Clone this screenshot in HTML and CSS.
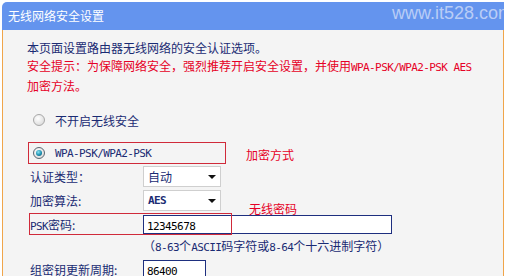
FILE: index.html
```html
<!DOCTYPE html>
<html lang="zh-CN">
<head>
    <meta charset="UTF-8">
    <meta name="viewport" content="width=device-width, initial-scale=1.0">
    <title>无线网络安全设置</title>
    <link rel="stylesheet" href="styles.css">
</head>
<body>
    <div class="panel">
        <!-- Header -->
        <div class="panel-head">
            <span class="panel-title">无线网络安全设置</span>
            <span class="watermark">www.it528.com</span>
        </div>

        <!-- Settings -->
        <div class="panel-body">
            <p class="intro">本页面设置路由器无线网络的安全认证选项。</p>
            <p class="warn">安全提示：为保障网络安全，强烈推荐开启安全设置，并使用<span class="mono">WPA-PSK/WPA2-PSK AES</span><br>加密方法。</p>

            <div class="option"><span class="radio"></span>不开启无线安全</div>

            <div class="option-row">
                <div class="option marked"><span class="radio on"></span><span class="mono">WPA-PSK/WPA2-PSK</span></div>
                <span class="note">加密方式</span>
            </div>

            <div class="field">
                <label>认证类型：</label>
                <div class="select">自动<span class="arrow"></span></div>
            </div>
            <div class="field">
                <label>加密算法:</label>
                <div class="select"><span class="mono bold">AES</span><span class="arrow"></span></div>
            </div>
            <div class="field psk">
                <label><span class="mono">PSK</span>密码:</label>
                <div class="input wide"><span class="mono">12345678</span></div>
                <span class="note psk-note">无线密码</span>
                <span class="mark-box"></span>
            </div>
            <p class="hint">（<span class="mono">8-63</span>个<span class="mono">ASCII</span>码字符或<span class="mono">8-64</span>个十六进制字符）</p>
            <div class="field">
                <label>组密钥更新周期:</label>
                <div class="input short"><span class="mono">86400</span></div>
            </div>
        </div>
    </div>
</body>
</html>
```

FILE: styles.css
```css
body {
    margin: 0;
    background: #fff;
    font-family: "Noto Sans CJK SC", "Liberation Sans", sans-serif;
    font-size: 12px;
    color: #1a2b73;
    overflow: hidden;
}
.panel {
    width: 502px;
    margin: 2px 0 0 2px;
}
.panel-head {
    position: relative;
    height: 28px;
    background: #6494ee;
    border-top-left-radius: 5px;
    overflow: hidden;
}
.panel-title {
    display: block;
    padding: 7px 0 0 6px;
    color: #fff;
    font-size: 12px;
    line-height: 14px;
}
.watermark {
    position: absolute;
    left: 390px;
    top: 0;
    font-family: "Liberation Sans", sans-serif;
    font-size: 18px;
    line-height: 22px;
    color: #b9cdf6;
    white-space: nowrap;
}
.panel-body {
    box-sizing: border-box;
    height: 246px;
    padding: 9px 0 0 24px;
    background: #f4f4f4;
    border-left: 1px solid #f0a54a;
    border-right: 1px solid #f0a54a;
    overflow: hidden;
}
.panel-body p {
    margin: 0;
    line-height: 18px;
}
.mono {
    font-family: "DejaVu Sans Mono", monospace;
    font-size: 11px;
    letter-spacing: -0.6px;
}
.bold {
    font-weight: bold;
}
.warn {
    color: #e60026;
}
.option {
    display: flex;
    align-items: center;
    height: 20px;
    margin: 15px 0 0 6px;
}
.radio {
    position: relative;
    width: 10px;
    height: 10px;
    margin-right: 10px;
    border: 1px solid #a8a8a8;
    border-radius: 50%;
    background: radial-gradient(circle at 40% 35%, #fff, #dcdcdc 80%);
}
.radio.on {
    border-color: #5a6670;
}
.radio.on::after {
    content: "";
    position: absolute;
    left: 2px;
    top: 2px;
    width: 6px;
    height: 6px;
    border-radius: 50%;
    background: radial-gradient(circle at 40% 35%, #8be3f2, #1a8fb0 55%, #0b4a62);
}
.option-row {
    display: flex;
    align-items: center;
    margin-top: 12px;
}
.option.marked {
    width: 192px;
    margin: 0 0 0 1px;
    padding-left: 4px;
    border: 1px solid #d02a3a;
}
.note {
    color: #e60026;
    line-height: 14px;
}
.option-row .note {
    margin: 4px 0 0 20px;
}
.field {
    display: flex;
    align-items: center;
    height: 24px;
    margin-left: 3px;
}
.field label {
    width: 113px;
    flex: none;
}
.select {
    display: flex;
    align-items: center;
    justify-content: space-between;
    box-sizing: border-box;
    width: 78px;
    height: 21px;
    padding: 0 4px 0 4px;
    background: #fff;
    border: 1px solid #cfcfcf;
}
.arrow {
    width: 0;
    height: 0;
    margin-top: 2px;
    border-left: 4px solid transparent;
    border-right: 4px solid transparent;
    border-top: 4px solid #111;
}
.input {
    box-sizing: border-box;
    height: 19px;
    padding: 0 0 0 3px;
    line-height: 17px;
    background: #fff;
    border: 1px solid #1e2f7f;
    color: #000;
}
.input.wide {
    width: 249px;
}
.input.short {
    width: 63px;
}
.psk {
    position: relative;
    height: 22px;
    margin-top: 1px;
}
.mark-box {
    position: absolute;
    left: -1px;
    top: 0;
    width: 201px;
    height: 20px;
    border: 1px solid #d02a3a;
}
.psk-note {
    position: absolute;
    left: 219px;
    top: -11px;
}
.panel-body .hint {
    margin: 2px 0 0 116px;
}
```
